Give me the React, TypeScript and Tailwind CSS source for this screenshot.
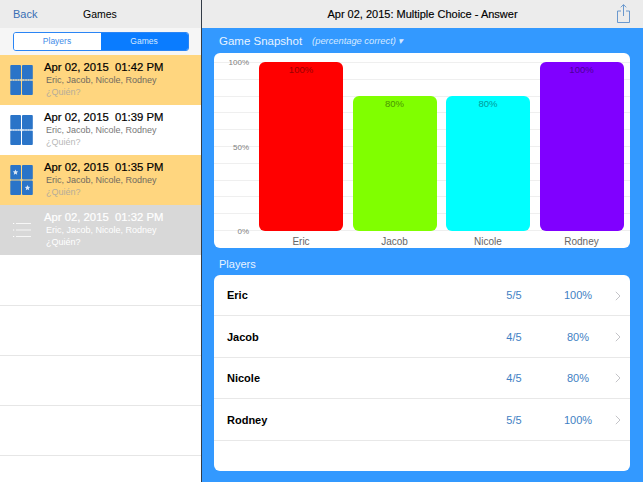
const games = [
  { time: "Apr 02, 2015  01:42 PM", icon: "split", row: "bg-[#ffd67f]", title: "text-black", sub: "text-[#6f6a5f]", hint: "text-[#b5ad9a]" },
  { time: "Apr 02, 2015  01:39 PM", icon: "split", row: "bg-white", title: "text-black", sub: "text-[#777777]", hint: "text-[#b8b8b8]" },
  { time: "Apr 02, 2015  01:35 PM", icon: "stars", row: "bg-[#ffd67f]", title: "text-black", sub: "text-[#6f6a5f]", hint: "text-[#b5ad9a]" },
  { time: "Apr 02, 2015  01:32 PM", icon: "list", row: "bg-[#d8d8d8]", title: "text-white", sub: "text-white", hint: "text-white" },
];

const bars = [
  { name: "Eric", value: 100, color: "bg-[#ff0000]", height: "h-[169px]", label: "text-[#9a0000]" },
  { name: "Jacob", value: 80, color: "bg-[#80ff00]", height: "h-[135px]", label: "text-[#4a9600]" },
  { name: "Nicole", value: 80, color: "bg-[#00ffff]", height: "h-[135px]", label: "text-[#009a9a]" },
  { name: "Rodney", value: 100, color: "bg-[#8000ff]", height: "h-[169px]", label: "text-[#4c0098]" },
];

const players = [
  { name: "Eric", score: "5/5", pct: "100%" },
  { name: "Jacob", score: "4/5", pct: "80%" },
  { name: "Nicole", score: "4/5", pct: "80%" },
  { name: "Rodney", score: "5/5", pct: "100%" },
];

function GameIcon({ kind }: { kind: string }) {
  if (kind === "list") {
    return (
      <svg width="24" height="30" viewBox="0 0 24 30" fill="none" stroke="#ffffff" strokeWidth="0.8">
        <path d="M6 8.500H21M6 15H21M6 21.500H21" />
        <path d="M3 8.500H4.200M3 15H4.200M3 21.500H4.200" strokeWidth="1.200" />
      </svg>
    );
  }
  return (
    <svg width="24" height="30" viewBox="0 0 24 30">
      <rect x="0.300" y="0" width="10.700" height="14.500" rx="1" fill="#2a74c8" />
      <rect x="12" y="0" width="10.800" height="14.500" rx="1" fill="#2a74c8" />
      <rect x="0.300" y="15.500" width="10.700" height="14.500" rx="1" fill="#2a74c8" />
      <rect x="12" y="15.500" width="10.800" height="14.500" rx="1" fill="#2a74c8" />
      {kind === "split" ? (
        <path d="M0.300 15H22.800" stroke="#dfe6ea" strokeWidth="1" strokeDasharray="1.500 1" />
      ) : (
        <>
          <path d="M5.500 4.500l.8 1.800 1.900.2-1.400 1.300.4 1.900-1.700-1-1.700 1 .4-1.900-1.400-1.300 1.900-.2z" fill="#d9e6f5" />
          <path d="M17.500 20l.8 1.800 1.900.2-1.400 1.300.4 1.900-1.700-1-1.700 1 .4-1.900-1.400-1.300 1.900-.2z" fill="#d9e6f5" />
        </>
      )}
    </svg>
  );
}

function Sidebar() {
  return (
    <div className="flex h-full w-[201px] shrink-0 flex-col bg-white">
      <div className="flex h-[28px] shrink-0 items-center bg-[#ececec] pl-[13px] pt-[1px]">
        <span className="w-[70px] text-[11px] text-[#3a6fb5]">Back</span>
        <span className="text-[10.500px] font-medium text-black">Games</span>
      </div>
      <div className="flex h-[27px] shrink-0 items-start justify-center bg-[#f6f6f6] pt-[4px]">
        <div className="flex h-[19px] w-[176px] overflow-hidden rounded-[3px] border border-[#2a85f5] text-[8.500px]">
          <div className="flex w-[87px] items-center justify-center bg-white text-[#3f8ce8]">Players</div>
          <div className="flex flex-1 items-center justify-center bg-[#0a7cff] text-[#d5e8ff]">Games</div>
        </div>
      </div>
      {games.map((game) => (
        <div key={game.time} className={`flex h-[50px] shrink-0 items-center pl-[10px] ${game.row}`}>
          <GameIcon kind={game.icon} />
          <div className="ml-[10px] flex flex-col">
            <span className={`whitespace-pre text-[11.300px] leading-[13px] font-medium [-webkit-text-stroke:0.2px] ${game.title}`}>{game.time}</span>
            <span className={`ml-[2px] text-[9px] leading-[12px] ${game.sub}`}>Eric, Jacob, Nicole, Rodney</span>
            <span className={`ml-[2px] text-[9px] leading-[13px] ${game.hint}`}>¿Quién?</span>
          </div>
        </div>
      ))}
      <div className="h-[51px] shrink-0 border-b border-[#e6e6e6]" />
      <div className="h-[50px] shrink-0 border-b border-[#e6e6e6]" />
      <div className="h-[50px] shrink-0 border-b border-[#e6e6e6]" />
      <div className="h-[50px] shrink-0 border-b border-[#e6e6e6]" />
    </div>
  );
}

function Chart() {
  return (
    <div className="ml-[12px] mr-[13px] h-[195px] overflow-hidden rounded-[6px] bg-white pt-[9px]">
      <div className="relative h-[169px]">
        <div className="absolute inset-0 flex flex-col justify-between">
          {Array.from({ length: 11 }).map((_, i) => (
            <div key={i} className="h-px bg-[#efefef]" />
          ))}
        </div>
        <div className="absolute top-[-4px] bottom-[-6px] left-0 flex w-[35px] flex-col items-end justify-between text-[8px] leading-[10px] text-[#808080]">
          <span>100%</span>
          <span>50%</span>
          <span>0%</span>
        </div>
        <div className="relative ml-[45px] flex h-full items-end gap-[9.500px]">
          {bars.map((bar) => (
            <div key={bar.name} className={`flex w-[84px] justify-center rounded-[6px] pt-[3px] text-[9.500px] leading-[10px] ${bar.color} ${bar.height} ${bar.label}`}>
              {bar.value}%
            </div>
          ))}
        </div>
      </div>
      <div className="ml-[45px] mt-[5px] flex gap-[9.500px]">
        {bars.map((bar) => (
          <span key={bar.name} className="w-[84px] text-center text-[10px] leading-[12px] text-[#666666]">
            {bar.name}
          </span>
        ))}
      </div>
    </div>
  );
}

function PlayerList() {
  return (
    <div className="ml-[12px] mr-[13px] h-[196px] overflow-hidden rounded-[6px] bg-white">
      {players.map((player) => (
        <div key={player.name} className="flex h-[41.400px] items-center border-b border-[#e8e8e8] pl-[13px] pr-[9px] pt-[1px]">
          <span className="flex-1 text-[11px] font-bold text-black">{player.name}</span>
          <span className="w-[30px] text-center text-[11px] text-[#3f7fc4]">{player.score}</span>
          <span className="ml-[29px] w-[40px] text-center text-[11px] text-[#3f7fc4]">{player.pct}</span>
          <svg className="ml-[17px]" width="6" height="10" viewBox="0 0 6 10" fill="none" stroke="#c4c4c8" strokeWidth="1">
            <path d="M0.800 0.800L5 5L0.800 9.200" />
          </svg>
        </div>
      ))}
    </div>
  );
}

export default function App() {
  return (
    <div className="flex h-[482px] w-[643px] overflow-hidden bg-[#3399ff] font-['Liberation_Sans',sans-serif]">
      <Sidebar />
      <div className="w-px shrink-0 bg-[#333c48]" />
      <div className="flex flex-1 flex-col">
        <div className="relative flex h-[28px] shrink-0 items-center justify-center bg-[#ececec] pt-[1px]">
          <span className="text-[11px] font-medium text-black [-webkit-text-stroke:0.15px]">Apr 02, 2015: Multiple Choice - Answer</span>
          <svg className="absolute right-[13px] top-[4px]" width="13" height="19" viewBox="0 0 13 19" fill="none" stroke="#5b8fcb" strokeWidth="0.900">
            <path d="M4 7H0.500V18.500H12.500V7H9" />
            <path d="M6.500 12V0.800M3.800 3.300L6.500 0.600L9.200 3.300" />
          </svg>
        </div>
        <div className="flex h-[25px] shrink-0 items-center pl-[17px] pt-[2px]">
          <span className="text-[11.500px] text-[#e8f3ff]">Game Snapshot</span>
          <span className="ml-[10px] text-[9.300px] italic text-[#d6e9ff]">(percentage correct) ▾</span>
        </div>
        <Chart />
        <div className="flex h-[27px] shrink-0 items-center pl-[17px] pt-[6px] text-[11px] text-[#e8f3ff]">Players</div>
        <PlayerList />
      </div>
    </div>
  );
}
